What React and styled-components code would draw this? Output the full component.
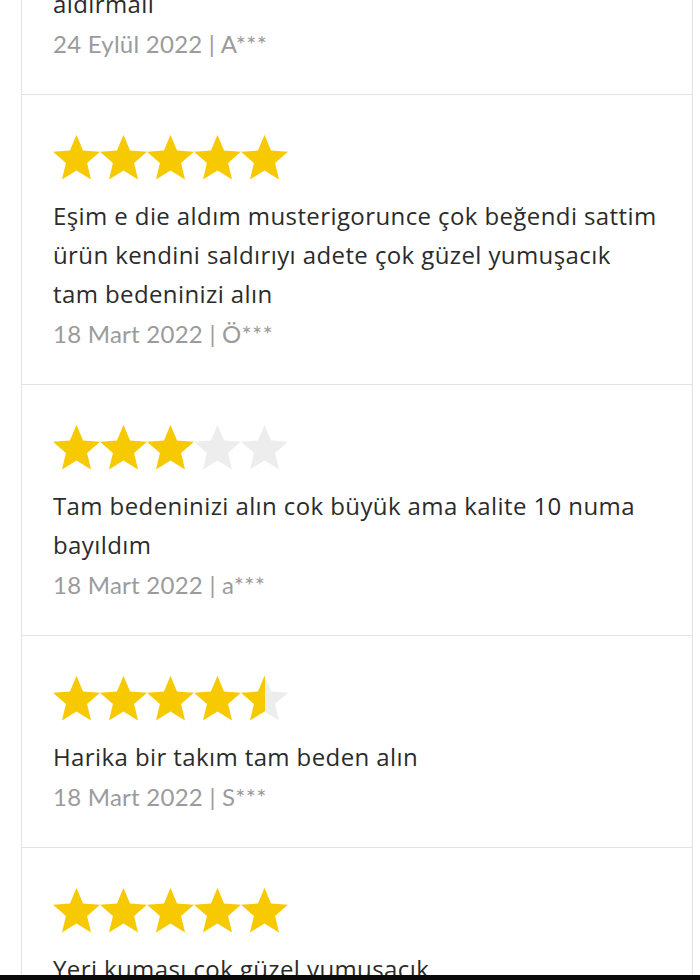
import React from 'react';
import styled, { createGlobalStyle } from 'styled-components';

const GlobalStyle = createGlobalStyle`
  html, body {
    margin: 0;
    padding: 0;
    background: #ffffff;
    overflow: hidden;
  }
`;

const Screen = styled.div`
  height: 980px;
  overflow: hidden;
  font-family: "Open Sans", "Noto Sans", sans-serif;
`;

const ReviewList = styled.div`
  width: 672px;
  margin: -56px 0 0 21px;
`;

const Card = styled.div`
  border: 1px solid #e2e2e2;
  border-top: none;
  padding: 40px 20px 31px 31px;
`;

const Stars = styled.div`
  display: flex;
  height: 45px;
  margin-bottom: 16px;
`;

const Body = styled.div`
  color: #2b2b2b;
  font-size: 24px;
  letter-spacing: 0.4px;
  line-height: 39px;
`;

const Line = styled.div`
  white-space: nowrap;
`;

const Meta = styled.div`
  color: #9b9b9b;
  font-family: Lato, "Open Sans", sans-serif;
  font-size: 24px;
  letter-spacing: 0.25px;
  line-height: 38px;
  padding-top: 2px;
  white-space: nowrap;
`;

const BottomBar = styled.div`
  position: fixed;
  left: 0;
  right: 0;
  bottom: 0;
  height: 5px;
  background: #0a0a0a;
`;

const starPoints = (() => {
  const R = 24.7;
  const r = R * 0.45;
  const cx = 23.5;
  const cy = 24.5;
  const pts = [];
  for (let i = 0; i < 10; i++) {
    const rad = i % 2 === 0 ? R : r;
    const a = -Math.PI / 2 + (i * Math.PI) / 5;
    pts.push(`${(cx + rad * Math.cos(a)).toFixed(2)},${(cy + rad * Math.sin(a)).toFixed(2)}`);
  }
  return pts.join(' ');
})();

const Star = ({ fill, id }) => (
  <svg width="47" height="45" viewBox="0 0 47 45">
    <defs>
      <linearGradient id={id} x1="0" x2="1" y1="0" y2="0">
        <stop offset={fill} stopColor="#f6c900" />
        <stop offset={fill} stopColor="#ededed" />
      </linearGradient>
    </defs>
    <polygon points={starPoints} fill={`url(#${id})`} />
  </svg>
);

const Rating = ({ value, idx }) => (
  <Stars>
    {[0, 1, 2, 3, 4].map((i) => (
      <Star key={i} id={`s-${idx}-${i}`} fill={Math.max(0, Math.min(1, value - i))} />
    ))}
  </Stars>
);

const reviews = [
  { rating: null, lines: ['aldirmali'], date: '24 Eylül 2022 | A***' },
  {
    rating: 5,
    lines: [
      'Eşim e die aldım musterigorunce çok beğendi sattim',
      'ürün kendini saldırıyı adete çok güzel yumuşacık',
      'tam bedeninizi alın',
    ],
    date: '18 Mart 2022 | Ö***',
  },
  {
    rating: 3,
    lines: ['Tam bedeninizi alın cok büyük ama kalite 10 numa', 'bayıldım'],
    date: '18 Mart 2022 | a***',
  },
  { rating: 4.5, lines: ['Harika bir takım tam beden alın'], date: '18 Mart 2022 | S***' },
  { rating: 5, lines: ['Yeri kuması çok güzel yumuşacık.'], date: '' },
];

export default function App() {
  return (
    <Screen>
      <GlobalStyle />
      <ReviewList>
        {reviews.map((r, idx) => (
          <Card key={idx}>
            {r.rating !== null && <Rating value={r.rating} idx={idx} />}
            <Body>
              {r.lines.map((l, i) => (
                <Line key={i}>{l}</Line>
              ))}
            </Body>
            {r.date && <Meta>{r.date}</Meta>}
          </Card>
        ))}
      </ReviewList>
      <BottomBar />
    </Screen>
  );
}
